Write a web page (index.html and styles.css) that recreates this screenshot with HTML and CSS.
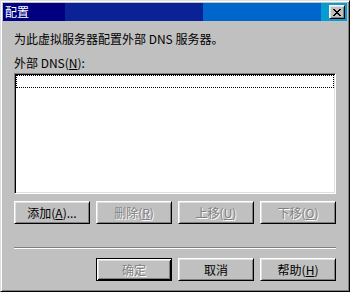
FILE: index.html
```html
<!DOCTYPE html>
<html lang="zh-CN">
<head>
    <meta charset="UTF-8">
    <title>配置</title>
    <link rel="stylesheet" href="styles.css">
</head>
<body>
    <div class="window">
        <div class="titlebar">
            <span class="title">配置</span>
            <button class="close" aria-label="关闭">
                <svg width="8" height="7" viewBox="0 0 8 7" shape-rendering="crispEdges">
                    <path d="M0 0h2v1h-2zM6 0h2v1h-2zM1 1h2v1h-2zM5 1h2v1h-2zM2 2h4v1h-4zM3 3h2v1h-2zM2 4h4v1h-4zM1 5h2v1h-2zM5 5h2v1h-2zM0 6h2v1h-2zM6 6h2v1h-2z" fill="#000"/>
                </svg>
            </button>
        </div>
        <div class="content">
            <p class="intro">为此虚拟服务器配置外部 DNS 服务器。</p>
            <p class="label">外部 DNS(<u>N</u>):</p>
            <div class="listbox">
                <div class="focus-item"></div>
            </div>
            <div class="row top-row">
                <button class="btn">添加(<u>A</u>)...</button>
                <button class="btn disabled">删除(<u>R</u>)</button>
                <button class="btn disabled">上移(<u>U</u>)</button>
                <button class="btn disabled">下移(<u>O</u>)</button>
            </div>
            <div class="separator"></div>
            <div class="row bottom-row">
                <span></span>
                <button class="btn default disabled">确定</button>
                <button class="btn">取消</button>
                <button class="btn">帮助(<u>H</u>)</button>
            </div>
        </div>
    </div>
</body>
</html>
```

FILE: styles.css
```css
* {
    box-sizing: border-box;
    margin: 0;
    padding: 0;
}

body {
    width: 350px;
    height: 292px;
    overflow: hidden;
    background-color: #c0c0c0;
    font-family: "Noto Sans CJK SC", sans-serif;
    font-size: 12px;
    color: #000;
}

.window {
    width: 350px;
    height: 292px;
    padding: 2px;
    background-color: #c0c0c0;
    border: 1px solid;
    border-color: #dfdfdf #000 #000 #dfdfdf;
    box-shadow: inset 1px 1px #fff, inset -1px -1px #808080;
}

/* caption */
.titlebar {
    height: 18px;
    display: flex;
    align-items: center;
    justify-content: space-between;
    padding: 0 2px 0 2px;
    background: linear-gradient(to right,
        #000080 0, #000080 62px,
        #0a2296 62px, #0a2296 200px,
        #0066cc 200px, #0066cc 318px,
        #069cd2 318px);
}

.title {
    color: #fff;
    line-height: 18px;
}

.close {
    width: 16px;
    height: 14px;
    display: flex;
    align-items: center;
    justify-content: center;
    background-color: #c0c0c0;
    border: 1px solid;
    border-color: #fff #000 #000 #fff;
    box-shadow: inset 1px 1px #dfdfdf, inset -1px -1px #808080;
}

/* body */
.content {
    padding: 0 11px;
}

.intro {
    margin-top: 11px;
    line-height: 14px;
}

.label {
    margin-top: 10px;
    line-height: 14px;
}

u {
    text-decoration: underline;
    text-underline-offset: 1px;
}

.listbox {
    margin-top: 3px;
    height: 121px;
    background-color: #fff;
    border: 1px solid;
    border-color: #808080 #fff #fff #808080;
    box-shadow: inset 1px 1px #000, inset -1px -1px #dfdfdf;
    padding: 1px;
}

.focus-item {
    height: 13px;
    border: 1px dotted #000;
}

.row {
    display: grid;
    grid-template-columns: repeat(4, 76px);
    gap: 6px;
}

.top-row {
    margin-top: 7px;
}

.bottom-row {
    margin-top: 9px;
}

.btn {
    height: 23px;
    display: flex;
    align-items: center;
    justify-content: center;
    font-family: "Noto Sans CJK SC", sans-serif;
    font-size: 12px;
    color: #000;
    background-color: #c0c0c0;
    border: 1px solid;
    border-color: #fff #000 #000 #fff;
    box-shadow: inset 1px 1px #dfdfdf, inset -1px -1px #808080;
}

.btn.default {
    border-color: #000;
    box-shadow: inset 1px 1px #fff, inset -1px -1px #000, inset 2px 2px #dfdfdf, inset -2px -2px #808080;
}

.btn.disabled {
    color: #808080;
    text-shadow: 1px 1px 0 #fff;
}

.separator {
    margin-top: 23px;
    height: 2px;
    border-top: 1px solid #808080;
    border-bottom: 1px solid #fff;
}
```
